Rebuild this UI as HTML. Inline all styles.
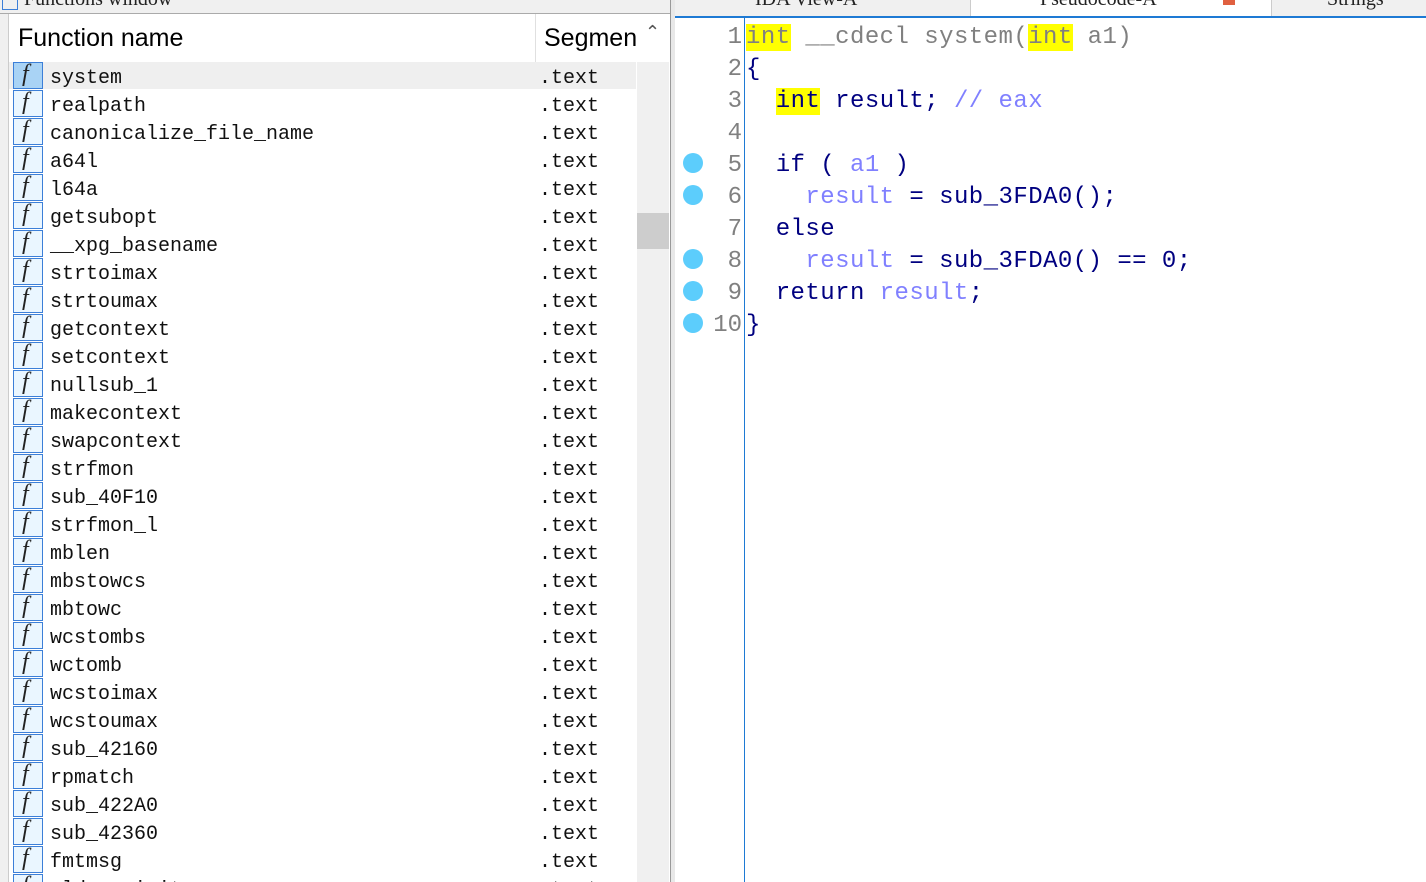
<!DOCTYPE html><html style="overflow:hidden"><head><style>
html,body{margin:0;width:1426px;height:882px;overflow:hidden}
body{background:#fff;position:relative;font-family:"Liberation Sans",sans-serif}
.a{position:absolute}
.row{position:absolute;left:12px;width:624px;height:28px}
.ic{position:absolute;left:1px;top:0;width:30px;height:27px;border:1px solid #3c7fd8;background:#eaf6ff;box-sizing:border-box}
.ic span{position:absolute;left:8px;top:-2px;font:italic 24px "Liberation Serif",serif;color:#222}
.nm{position:absolute;left:38px;top:5px;font:20px "Liberation Mono",monospace;color:#111}
.sg{position:absolute;left:527px;top:5px;font:20px "Liberation Mono",monospace;color:#111}
.code{position:absolute;left:746px;font:24px/32px "Liberation Mono",monospace;letter-spacing:0.45px;color:#000080;white-space:pre}
.ln{position:absolute;left:700px;width:42px;text-align:right;font:24px/32px "Liberation Mono",monospace;color:#808080}
.dot{position:absolute;left:683px;width:20px;height:20px;border-radius:50%;background:#5ccdfc}
.y{background:#ff0;color:#808080}
.g{color:#808080}.v{color:#8080ff}.k{color:#000080}
</style></head><body>
<div class="a" style="left:0;top:0;width:670px;height:13px;background:#f0f0f0;border-bottom:1px solid #aaa;overflow:hidden"><span style="position:absolute;left:24px;top:-12px;font:20px 'Liberation Serif',serif;color:#222">Functions window</span><div class="a" style="left:2px;top:-4px;width:14px;height:12px;border:1px solid #3c7fd8"></div></div>
<div class="a" style="left:0;top:14px;width:8px;height:868px;background:#f0f0f0;border-right:1px solid #ccc"></div>
<div class="a" style="left:670px;top:0;width:4px;height:882px;background:#e8e8e8;border-left:1px solid #999"></div>
<div class="a" style="left:9px;top:14px;width:627px;height:48px;border-bottom:1px solid #e0e0e0"></div>
<div class="a" style="left:535px;top:14px;width:1px;height:48px;background:#e0e0e0"></div>
<div class="a" style="left:18px;top:24px;font-size:25px;color:#000">Function name</div>
<div class="a" style="left:544px;top:24px;font-size:25px;color:#000;width:93px;overflow:hidden;white-space:nowrap">Segment</div>
<div class="a" style="left:645px;top:22px;font-size:18px;color:#555">&#8963;</div>
<div class="a" style="left:637px;top:62px;width:32px;height:820px;background:#f0f0f0"></div>
<div class="a" style="left:637px;top:213px;width:32px;height:36px;background:#cdcdcd"></div>
<div class="a" style="left:9px;top:62px;width:627px;height:27px;background:#efefef"></div>
<div id="rows"></div>
<script>
var n=["system","realpath","canonicalize_file_name","a64l","l64a","getsubopt","__xpg_basename","strtoimax","strtoumax","getcontext","setcontext","nullsub_1","makecontext","swapcontext","strfmon","sub_40F10","strfmon_l","mblen","mbstowcs","mbtowc","wcstombs","wctomb","wcstoimax","wcstoumax","sub_42160","rpmatch","sub_422A0","sub_42360","fmtmsg","wldexp_init"];
var h="";for(var i=0;i<n.length;i++){h+='<div class="row" style="top:'+(62+28*i)+'px"><div class="ic"'+(i==0?' style="background:#a9d3f5"':'')+'><span>f</span></div><div class="nm">'+n[i]+'</div><div class="sg">.text</div></div>';}
document.getElementById("rows").innerHTML=h;
</script>
<div class="a" style="left:675px;top:0;width:751px;height:16px;background:#f0f0f0;border-bottom:2px solid #1e7ad4;overflow:hidden">
<div class="a" style="left:295px;top:0;width:300px;height:18px;background:#fff;border-left:1px solid #ccc;border-right:1px solid #ccc"></div>
<span class="a" style="left:80px;top:-12px;font:20px 'Liberation Serif',serif;color:#222">IDA View-A</span>
<span class="a" style="left:365px;top:-12px;font:20px 'Liberation Serif',serif;color:#222">Pseudocode-A</span>
<span class="a" style="left:652px;top:-12px;font:20px 'Liberation Serif',serif;color:#222">Strings</span>
<div class="a" style="left:548px;top:0;width:12px;height:5px;background:#e06040"></div>
</div>
<div class="a" style="left:744px;top:18px;width:1px;height:864px;background:#1e7ad4"></div>
<div class="ln" style="top:22px">1<br>2<br>3<br>4<br>5<br>6<br>7<br>8<br>9<br>10</div>
<div class="dot" style="top:153px"></div><div class="dot" style="top:185px"></div><div class="dot" style="top:249px"></div><div class="dot" style="top:281px"></div><div class="dot" style="top:313px"></div>
<div class="code" style="top:22px"><span class="y">int</span><span class="g"> __cdecl system(</span><span class="y">int</span><span class="g"> a1)</span>
{
  <span class="y" style="color:#000080">int</span> result; <span class="v">// eax</span>

  if ( <span class="v">a1</span> )
    <span class="v">result</span> = sub_3FDA0();
  else
    <span class="v">result</span> = sub_3FDA0() == 0;
  return <span class="v">result</span>;
}</div>
</body></html>
